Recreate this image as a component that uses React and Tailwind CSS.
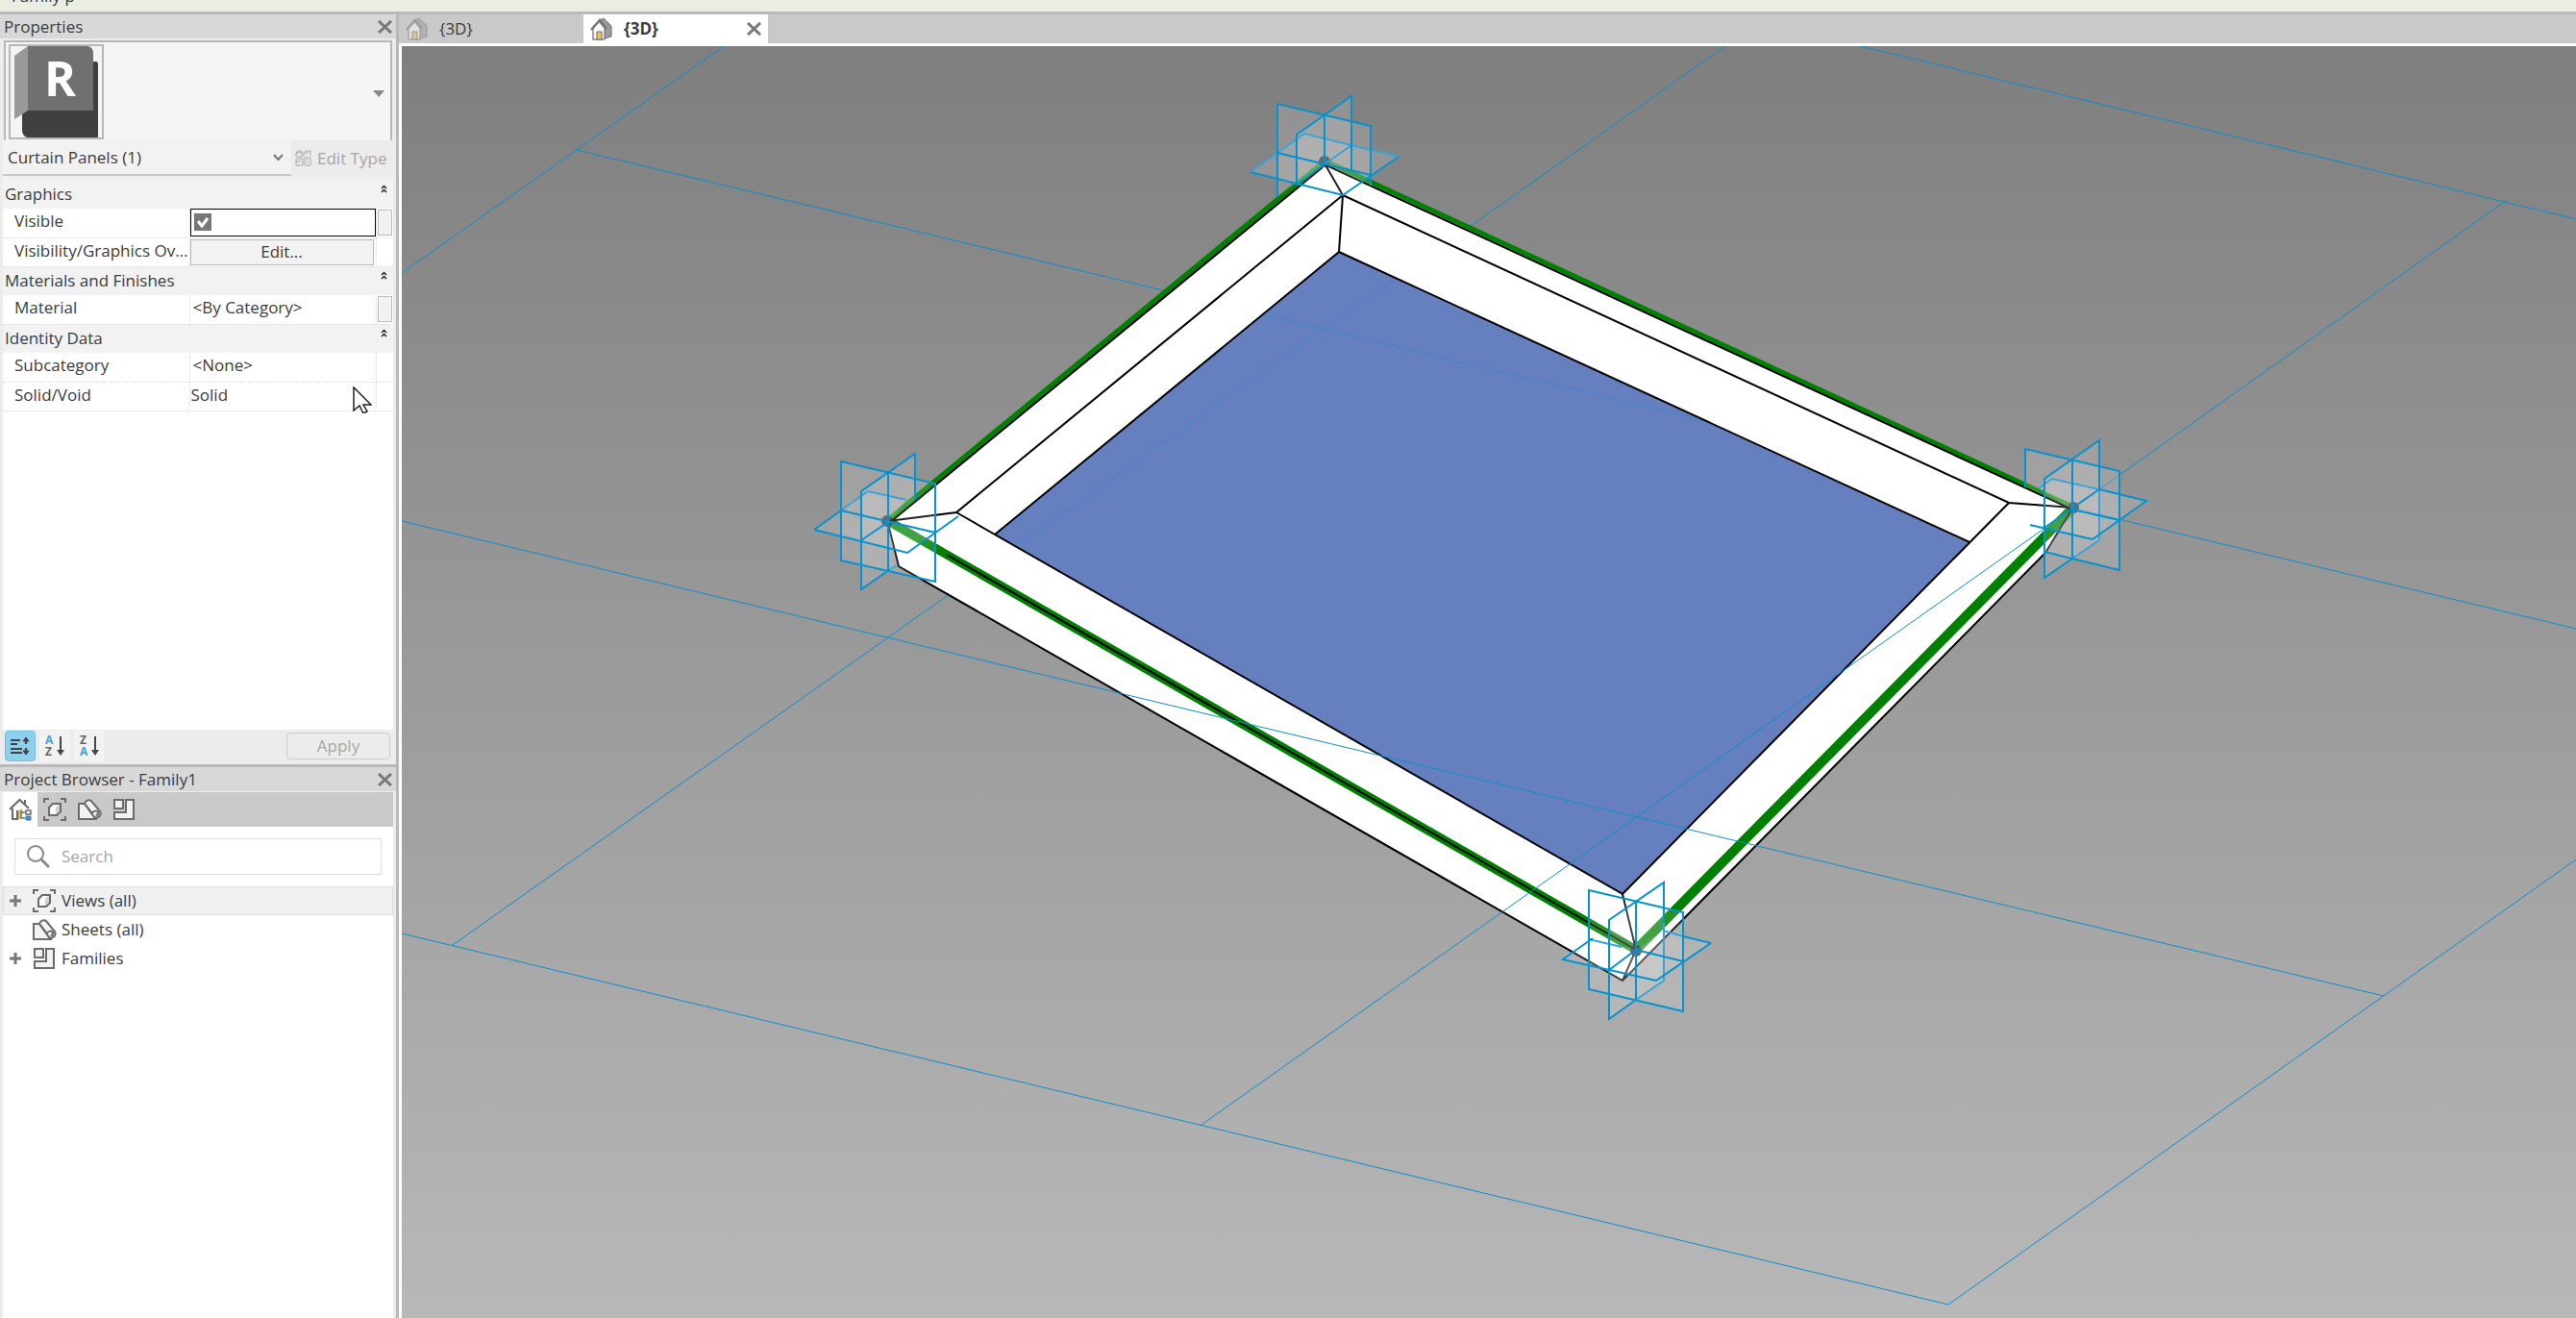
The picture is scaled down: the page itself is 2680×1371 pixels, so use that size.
import React from "react";

// Each corner carries three crossing reference planes: filled faces plus their visible edges
const CORNERS = [
  {
    x: 1378,
    y: 168,
    faces: [
      "1329,108 1426,131 1426,193 1378,170 1329,205",
      "1406,100 1406,178 1378,170 1349,192 1349,140",
      "1301,179 1357,139 1455,163 1397,203",
    ],
    edges:
      "M1329 205V108L1426 131V193M1406 178V100L1349 140V193M1301 179L1397 203 1455 163M1378 120V170M1329 159L1426 182M1349 192L1378 171",
    faint: "M1301 179L1357 139 1455 163M1406 151L1378 171",
  },
  {
    x: 923,
    y: 542,
    faces: [
      "875,480 973,503 973,605 875,583",
      "952,472 952,520 924,543 933,588 896,613 896,511",
      "847,551 903,511 943,520 924,543 973,554 944,575",
    ],
    edges:
      "M875 480L973 503V605L875 583zM952 519V472L896 511V613L922 595M847 551L944 575 997 537M924 492V594M875 531L973 554M896 562L924 543M847 551L875 531",
    faint: "M875 531L903 511 943 520M922 595L933 588",
  },
  {
    x: 2157,
    y: 528,
    faces: [
      "2107,467 2205,490 2205,593 2127,574 2156,530 2107,507",
      "2184,458 2184,562 2127,601 2127,498",
      "2233,521 2177,561 2127,549 2156,530 2121,508 2135,498",
    ],
    edges:
      "M2107 507V467L2205 490V593L2127 574M2184 510V458L2127 498V601L2156 581M2112 546L2177 561 2233 521 2184 509M2156 479V581M2156 530L2205 541M2127 549L2184 509",
    faint: "M2121 508L2135 498 2184 509V562L2156 581",
  },
  {
    x: 1702,
    y: 989,
    faces: [
      "1653,926 1751,949 1751,1052 1653,1029",
      "1731,918 1674,957 1674,1060 1731,1020",
      "1780,981 1723,1020 1626,998 1657,976 1702,988 1730,968",
    ],
    edges:
      "M1653 926L1751 949V1052L1653 1029zM1731 960V918L1674 957V1060L1702 1040M1780 981L1723 1020 1626 998 1657 976M1780 981L1751 974M1702 938V1040M1702 988L1751 1000M1674 1009L1702 988",
    faint: "M1653 977L1687 985M1730 968L1751 974M1731 960V1020L1702 1040",
  },
];

const Marker = ({ x, y, faces, edges, faint }) => (
  <g>
    <circle cx={x} cy={y} r="6" fill="#111" />
    {faces.map((points) => (
      <polygon key={points} points={points} fill="#fff" fillOpacity="0.14" />
    ))}
    <path d={faint} stroke="#38a5da" strokeWidth="2" />
    <path d={edges} stroke="#0492d0" strokeWidth="2" />
  </g>
);

const HomeIcon = ({ className }) => (
  <svg className={className} width="23" height="23" viewBox="0 0 23 23">
    <path d="M10 2l4-2 8 8v11l-7 2V10z" fill="#9a9a9a" stroke="#6f6f6f" />
    <path d="M3 10v12h12V10L9 3z" fill="#fafafa" stroke="#888" strokeWidth="1.5" />
    <path d="M1 12l9-10 7 9" fill="none" stroke="#777" strokeWidth="2.5" />
    <path d="M7 14h5v8H7z" fill="#f0c75a" stroke="#666" />
  </svg>
);

const BrowserHomeIcon = () => (
  <svg width="24" height="24" viewBox="0 0 24 24" fill="none" stroke="#6b6b6b" strokeWidth="2">
    <path d="M4 11v11h5V13" />
    <path d="M1 12L11.500 2 21 11M17 2v5" />
    <path d="M10 13h2v9h-2z" fill="#f0b93a" stroke="none" />
    <path d="M13 12v9h4M13 15h4" strokeWidth="1.5" />
    <path d="M18 13h5v4h-5z" strokeWidth="1.5" />
    <path d="M18 19h5v4h-5z" fill="#4a90cf" stroke="#2c78bd" strokeWidth="1" />
  </svg>
);

const ViewsIcon = () => (
  <svg width="24" height="24" viewBox="0 0 24 24" fill="none" stroke="#6b6b6b" strokeWidth="2">
    <path d="M1 5V1h5M18 1h5v4M23 19v4h-5M6 23H1v-4" />
    <path d="M6 10l4-4h8v8l-4 4H6z" fill="#fafafa" />
    <path d="M13 10l4-3v7l-4 3z" fill="#d0d0d0" stroke="none" />
  </svg>
);

const SheetsIcon = () => (
  <svg width="25" height="24" viewBox="0 0 25 24" fill="none" stroke="#6b6b6b" strokeWidth="2">
    <path d="M0 6h8l9 16H0z" fill="#f2f2f2" stroke="none" />
    <path d="M0 6h7M1 6v16M0 22h20" />
    <path d="M7 6c1-3 4-5 7-3l9 11c2 4-2 8-6 6z" fill="#f2f2f2" />
    <path d="M7 6l8 10c1-3 5-3 6-1s-1 4-2 2" />
  </svg>
);

const FamiliesIcon = () => (
  <svg width="24" height="24" viewBox="0 0 24 24" fill="#f2f2f2" stroke="#6b6b6b" strokeWidth="2">
    <path d="M2 2h9v9H2z" />
    <path d="M14 2h8v20H2v-7h12z" />
  </svg>
);

const CloseButton = ({ label }) => (
  <button type="button" aria-label={label} className="flex size-4 items-center justify-center">
    <svg width="15" height="14" viewBox="0 0 15 14" stroke="#777" strokeWidth="3">
      <path d="M1 1l13 12M14 1L1 13" />
    </svg>
  </button>
);

const PanelTitle = ({ children }) => (
  <div className="flex h-[25px] shrink-0 items-center justify-between bg-[#d8d8d8] px-1">
    <h2>{children}</h2>
    <CloseButton label={`Close ${children}`} />
  </div>
);

const GroupRow = ({ children }) => (
  <tr className="h-[30px] bg-[#f2f2f2]">
    <th colSpan={3} scope="colgroup" className="p-0 font-normal">
      <button type="button" className="flex w-full items-center justify-between pl-0.5 pr-1.5">
        {children}
        <svg className="mb-3" width="7" height="9" viewBox="0 0 7 9" fill="none" stroke="#222" strokeWidth="1.5">
          <path d="M1 4l2.500-2.500L6 4M1 8l2.500-2.500L6 8" />
        </svg>
      </button>
    </th>
  </tr>
);

const PropertyRow = ({ label, children, extra }) => (
  <tr className="h-[30px] border-b border-dotted border-[#ddd]">
    <th scope="row" className="truncate p-0 pb-[3px] pl-3 text-left font-normal">
      {label}
    </th>
    <td className="border-l border-dotted border-[#ddd] p-0">{children}</td>
    <td className="border-l border-dotted border-[#ddd] p-px">
      {extra && (
        <button
          type="button"
          aria-label={`${label} options`}
          className="block h-[27px] w-[15px] border border-[#bbb] bg-[#f2f2f2]"
        />
      )}
    </td>
  </tr>
);

const SortIcon = ({ top, bottom }) => (
  <svg className="overflow-visible" width="20" height="22" viewBox="0 0 20 22">
    <text x="0" y="9" fontSize="12" fontWeight="700" fill={top === "A" ? "#3fa0e8" : "#666"}>
      {top}
    </text>
    <text x="0" y="21" fontSize="12" fontWeight="700" fill={bottom === "A" ? "#3fa0e8" : "#666"}>
      {bottom}
    </text>
    <path d="M16 1v17" stroke="#444" strokeWidth="2" />
    <path d="M12 15h8l-4 6z" fill="#444" />
  </svg>
);

const Properties = () => (
  <section className="flex h-[780px] shrink-0 flex-col bg-[#ececec]">
    <PanelTitle>Properties</PanelTitle>
    <button
      type="button"
      aria-label="Type selector"
      className="mx-1 mt-0.5 flex h-[104px] shrink-0 items-center justify-between border-2 border-b-0 border-[#b8b8b8] bg-[#f4f4f4] pl-[3px] pr-1.5"
    >
      <svg className="border-2 border-[#b8b8b8]" width="99" height="99" viewBox="0 0 95 95">
        <path d="M12 66h70V16h7q2 0 2 3v76H17q-5-2-5-8z" fill="#404040" />
        <path d="M4 10L18 0v67L4 76z" fill="#999" />
        <path d="M18 0h63q5 2 5 7v60H18z" fill="#707070" />
        <text x="35" y="52" fontSize="50" fontWeight="700" fill="#fff">
          R
        </text>
      </svg>
      <svg className="mt-1" width="12" height="7" viewBox="0 0 12 7">
        <path d="M0 0h12L6 7z" fill="#888" />
      </svg>
    </button>
    <div className="mx-[3px] flex h-[37px] shrink-0">
      <button
        type="button"
        className="flex w-[300px] items-center justify-between border-b-2 border-[#c8c8c8] bg-[#f2f2f2] pl-[5px] pr-2"
      >
        Curtain Panels (1)
        <svg width="11" height="8" viewBox="0 0 11 8" fill="none" stroke="#777" strokeWidth="2">
          <path d="M1 1l4.500 5L10 1" />
        </svg>
      </button>
      <button type="button" disabled className="flex grow items-center gap-1.5 pl-1 text-[#a6a6a6]">
        <svg width="17" height="17" viewBox="0 0 17 17" fill="none" stroke="#a6a6a6">
          <path d="M1 3l2-2h4v6H1zM9 3l2-2h5v5M1 10l1-1h6v7H1zM1 3h5M9 3h5M9 3v4M1 12h5" />
          <path d="M10 8h6v8h-6zM12 10h2M12 13h2" />
        </svg>
        Edit Type
      </button>
    </div>
    <div className="mx-[3px] mt-px grow border-t-[3px] border-[#f2f2f2] bg-white">
      <table className="w-full table-fixed border-collapse">
        <colgroup>
          <col />
          <col className="w-[194px]" />
          <col className="w-[18px]" />
        </colgroup>
        <tbody>
          <GroupRow>Graphics</GroupRow>
          <PropertyRow label="Visible" extra>
            <div className="flex h-[29px] items-center border border-black pb-0.5 pl-[3px]">
              <label className="grid">
                <input
                  type="checkbox"
                  aria-label="Visible"
                  defaultChecked
                  className="col-start-1 row-start-1 size-[18px] appearance-none bg-[#777]"
                />
                <svg
                  className="pointer-events-none col-start-1 row-start-1"
                  width="18"
                  height="18"
                  viewBox="0 0 18 18"
                  fill="none"
                  stroke="#fff"
                  strokeWidth="3"
                >
                  <path d="M4 8l4 5 6-8" />
                </svg>
              </label>
            </div>
          </PropertyRow>
          <PropertyRow label="Visibility/Graphics Overrides">
            <button type="button" className="block h-[27px] w-[191px] border border-[#b8b8b8] bg-[#f2f2f2]">
              Edit...
            </button>
          </PropertyRow>
          <GroupRow>Materials and Finishes</GroupRow>
          <PropertyRow label="Material" extra>
            <div className="pb-[3px] pl-[3px]">&lt;By Category&gt;</div>
          </PropertyRow>
          <GroupRow>Identity Data</GroupRow>
          <PropertyRow label="Subcategory">
            <div className="pb-[3px] pl-[3px]">&lt;None&gt;</div>
          </PropertyRow>
          <PropertyRow label="Solid/Void">
            <div className="pb-[3px] pl-px">Solid</div>
          </PropertyRow>
        </tbody>
      </table>
    </div>
    <div className="flex h-9 shrink-0 items-center gap-1 pb-0.5 pl-[5px] pr-1.5">
      <button
        type="button"
        aria-label="Group by category"
        className="flex size-8 items-center justify-center rounded border border-[#73bfe0] bg-[#8fcfee]"
      >
        <svg width="20" height="20" viewBox="0 0 20 20" stroke="#444" strokeWidth="2">
          <path d="M0 4h10M0 8h7M0 13h12M0 17h12M16 3v5M16 12v5" />
          <path d="M13 5l3-4 3 4zM13 15l3 4 3-4z" fill="#444" strokeWidth="1" />
        </svg>
      </button>
      <button type="button" aria-label="Sort ascending" className="flex size-8 items-center justify-center bg-[#f2f2f2]">
        <SortIcon top="A" bottom="Z" />
      </button>
      <button type="button" aria-label="Sort descending" className="flex size-8 items-center justify-center bg-[#f2f2f2]">
        <SortIcon top="Z" bottom="A" />
      </button>
      <button
        type="button"
        disabled
        className="ml-auto h-7 w-[108px] rounded border border-[#ccc] text-[#a6a6a6]"
      >
        Apply
      </button>
    </div>
  </section>
);

const TREE = [
  { name: "Views (all)", Icon: ViewsIcon, expandable: true, selected: true },
  { name: "Sheets (all)", Icon: SheetsIcon },
  { name: "Families", Icon: FamiliesIcon, expandable: true },
];

const BROWSER_TABS = [
  { name: "All", Icon: BrowserHomeIcon },
  { name: "Views", Icon: ViewsIcon },
  { name: "Sheets", Icon: SheetsIcon },
  { name: "Families", Icon: FamiliesIcon },
];

const ProjectBrowser = () => (
  <section className="flex grow flex-col border-t-[3px] border-[#b9b9b9] bg-[#ececec]">
    <PanelTitle>Project Browser - Family1</PanelTitle>
    <div className="mx-[3px] mt-px flex h-9 shrink-0 bg-[#c9c9c9]">
      {BROWSER_TABS.map(({ name, Icon }, i) => (
        <button
          key={name}
          type="button"
          aria-label={name}
          className={
            i === 0
              ? "flex w-9 items-center justify-center bg-white"
              : "flex w-9 items-center justify-center"
          }
        >
          <Icon />
        </button>
      ))}
    </div>
    <div className="mx-[3px] grow bg-white">
      <label className="mx-3 mt-3 flex h-[38px] items-center gap-3 border border-[#ddd] pl-3">
        <svg width="24" height="24" viewBox="0 0 24 24" fill="none" stroke="#888">
          <circle cx="9" cy="9" r="8" strokeWidth="2" />
          <path d="M15 15l8 8" strokeWidth="3" />
        </svg>
        <input
          type="text"
          aria-label="Search"
          placeholder="Search"
          className="w-60 outline-none placeholder:text-[#a6a6a6]"
        />
      </label>
      <ul className="mt-3">
        {TREE.map(({ name, Icon, expandable, selected }) => (
          <li
            key={name}
            className={
              selected
                ? "flex h-[30px] items-center border border-[#ddd] bg-[#f0f0f0] pl-1.5"
                : "flex h-[30px] items-center border border-transparent pl-1.5"
            }
          >
            <span className="w-6">
              {expandable && (
                <button type="button" aria-label={`Expand ${name}`} className="block">
                  <svg width="12" height="12" viewBox="0 0 12 12" stroke="#777" strokeWidth="3">
                    <path d="M6 0v12M0 6h12" />
                  </svg>
                </button>
              )}
            </span>
            <span className="w-[25px]">
              <Icon />
            </span>
            <span className="pl-[5px]">{name}</span>
          </li>
        ))}
      </ul>
    </div>
  </section>
);

const ViewTabs = () => (
  <div className="flex h-[30px] shrink-0 bg-[#c9c9c9]">
    <button type="button" className="flex w-48 items-center gap-3 pl-[7px]">
      <HomeIcon className="opacity-50" />
      {"{3D}"}
    </button>
    <div className="flex w-48 items-center justify-between bg-white px-[7px]">
      <button type="button" className="flex items-center gap-3 font-bold">
        <HomeIcon />
        {"{3D}"}
      </button>
      <CloseButton label="Close view" />
    </div>
  </div>
);

const Viewport = () => (
  <div className="flex min-h-0 grow overflow-hidden border-l-[3px] border-t-[3px] border-white bg-linear-to-b from-[#7f7f7f] to-[#b8b8b8]">
    <svg className="h-[1323px] w-[2262px] shrink-0" viewBox="418 48 2262 1323" fill="none">
      {/* level grid behind the panel */}
      <path
        d="M600 156L2680 654M418 284L753 48M471 983L1795 48M418 971L2027 1357L2680 894M1936 48L2680 228"
        stroke="#0b8fcc"
      />
      <path d="M1378 168L924 542L935 589L1688 1020L2128 575L2156 530z" fill="#fff" />
      <path d="M1393 262L1035 556L1688 930L2049 565z" fill="#6680bf" />
      <path d="M1058 568L1451 290M1314 327L1775 438" stroke="#3f86d2" />
      <g stroke="#008000">
        <path d="M1378 168L924 541" strokeWidth="6" />
        <path d="M1378 167L2156 527" strokeWidth="5" />
        <path d="M924 542L1702 988" strokeWidth="9" />
        <path d="M2156 529L1702 988" strokeWidth="10" />
      </g>
      <g stroke="#000" strokeWidth="2">
        <path d="M1376 174L924 545L935 589L1688 1020L2128 575L2156 529M1688 1020L1702 988" />
        <path d="M1378 170L1397 203L1393 262L1035 556M1393 262L2049 564" />
        <path d="M1380 172L2156 530" />
        <path d="M1397 203L995 533L924 542M995 533L1688 930L1702 988M1397 203L2090 523L2156 528M2090 523L1688 930" />
        <path d="M985 577L1702 988" />
      </g>
      {/* grid lines that pass in front of it */}
      <path d="M935 666L2480 1036M1250 1170L2156 529" stroke="#0b8fcc" />
      <path d="M418 542L935 666M2156 529L2608 208" stroke="#0b8fcc" />
      {CORNERS.map((corner) => (
        <Marker key={corner.x} {...corner} />
      ))}
    </svg>
  </div>
);

const Cursor = () => (
  <svg className="pointer-events-none absolute left-[367px] top-[402px]" width="20" height="28" viewBox="0 0 20 28">
    <path d="M1 1v24l6-5 4 8 4-2-4-7h8z" fill="#fff" stroke="#222" strokeWidth="1.5" />
  </svg>
);

const App = () => (
  <div className="flex h-screen flex-col overflow-hidden bg-[#b9b9b9] font-['Open_Sans',sans-serif] text-[17px] leading-6 text-[#3c3c3c]">
    <header className="flex h-3 shrink-0 items-end overflow-hidden bg-[#e9ede2] pb-2 pl-3">
      <span className="leading-4">Family p</span>
    </header>
    <div className="flex min-h-0 grow gap-[3px] pt-[3px]">
      <aside className="flex w-[412px] shrink-0 flex-col">
        <Properties />
        <ProjectBrowser />
      </aside>
      <main className="flex min-w-0 grow flex-col">
        <ViewTabs />
        <Viewport />
      </main>
    </div>
    <Cursor />
  </div>
);

export default App;
